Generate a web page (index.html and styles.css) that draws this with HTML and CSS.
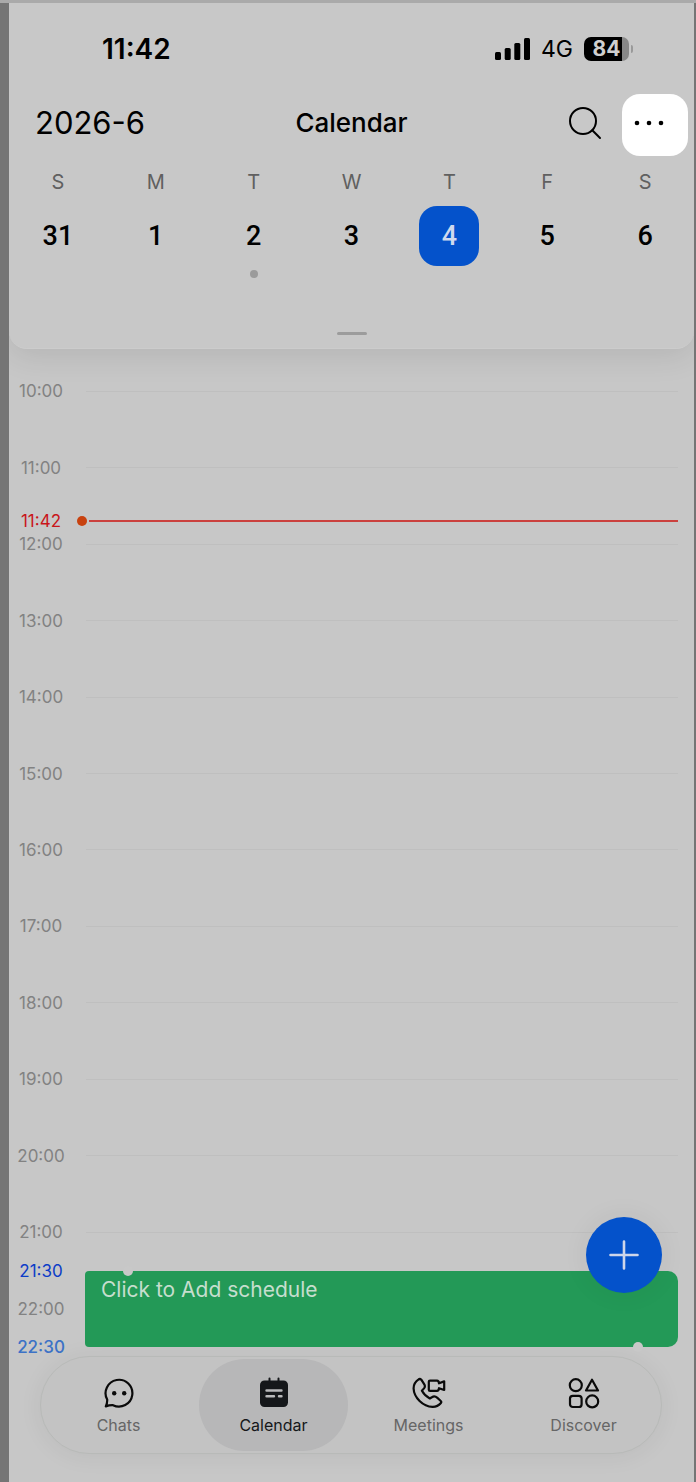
FILE: index.html
```html
<!DOCTYPE html>
<html lang="en">
<head>
<meta charset="UTF-8" />
<meta name="viewport" content="width=device-width, initial-scale=1" />
<title>Calendar</title>
<link rel="stylesheet" href="styles.css">
</head>
<body>

<div class="screen">
  <header class="panel">
    <div class="status-bar">
      <span class="clock">11:42</span>
      <div class="status-icons">
        <svg width="35" height="22" viewBox="0 0 35 22" aria-hidden="true">
          <rect x="0" y="14" width="6" height="8" rx="1.5"/>
          <rect x="9.7" y="10" width="6" height="12" rx="1.5"/>
          <rect x="19.3" y="5" width="6" height="17" rx="1.5"/>
          <rect x="29" y="0" width="6" height="22" rx="1.5"/>
        </svg>
        <span class="network">4G</span>
        <span class="battery"><span class="battery-level">84</span></span>
      </div>
    </div>

    <div class="title-bar">
      <div class="month">2026-6</div>
      <h1 class="title">Calendar</h1>
      <div class="actions">
        <button class="icon-btn" aria-label="Search">
          <svg width="34" height="34" viewBox="0 0 34 34" fill="none" stroke="#000" stroke-width="2" stroke-linecap="round">
            <circle cx="15" cy="15" r="13"/>
            <path d="M24.3 24.3L32 32"/>
          </svg>
        </button>
        <button class="more-btn" aria-label="More">
          <svg width="30" height="6" viewBox="0 0 30 6">
            <circle cx="3" cy="3" r="2.3"/>
            <circle cx="15" cy="3" r="2.3"/>
            <circle cx="27" cy="3" r="2.3"/>
          </svg>
        </button>
      </div>
    </div>

    <div class="week">
      <div class="day"><span class="weekday">S</span><button class="date">31</button></div>
      <div class="day"><span class="weekday">M</span><button class="date">1</button></div>
      <div class="day"><span class="weekday">T</span><button class="date">2</button><span class="dot"></span></div>
      <div class="day"><span class="weekday">W</span><button class="date">3</button></div>
      <div class="day"><span class="weekday">T</span><button class="date selected">4</button></div>
      <div class="day"><span class="weekday">F</span><button class="date">5</button></div>
      <div class="day"><span class="weekday">S</span><button class="date">6</button></div>
    </div>
    <div class="handle"></div>
  </header>

  <main class="timeline">
    <div class="hours">
      <div class="hour"><span class="time">10:00</span></div>
      <div class="hour"><span class="time">11:00</span></div>
      <div class="hour"><span class="time">12:00</span></div>
      <div class="hour"><span class="time">13:00</span></div>
      <div class="hour"><span class="time">14:00</span></div>
      <div class="hour"><span class="time">15:00</span></div>
      <div class="hour"><span class="time">16:00</span></div>
      <div class="hour"><span class="time">17:00</span></div>
      <div class="hour"><span class="time">18:00</span></div>
      <div class="hour"><span class="time">19:00</span></div>
      <div class="hour"><span class="time">20:00</span></div>
      <div class="hour"><span class="time">21:00</span></div>
      <div class="hour event-hour">
        <span class="time">22:00</span>
        <span class="time edge-start">21:30</span>
        <span class="time edge-end">22:30</span>
        <button class="event">Click to Add schedule</button>
      </div>
      <!-- 1.7 hours past 10:00, plus the half row above it, out of 13 rows -->
      <div class="now" style="top: 16.92%"><span class="time">11:42</span></div>
    </div>
    <button class="add-btn" aria-label="Add schedule">
      <svg width="30" height="30" viewBox="0 0 30 30" stroke="#ced6ea" stroke-width="2.6" stroke-linecap="round">
        <path d="M1.5 15H28.5M15 1.5V28.5"/>
      </svg>
    </button>
  </main>

  <nav class="tabs">
    <a class="tab" href="#chats">
      <svg width="32" height="32" viewBox="0 0 32 32" fill="none" stroke="#0a0a0a" stroke-width="2.2" stroke-linejoin="round">
        <path d="M4.2 22.6A13.4 13.4 0 1 1 10 28.2C7.600 28.100 5.200 28.500 2.800 29.400C3.900 27.200 4.300 25 4.200 22.600Z"/>
        <circle cx="11.2" cy="16.3" r="2.2" fill="#0a0a0a" stroke="none"/>
        <circle cx="21.2" cy="16.3" r="2.2" fill="#0a0a0a" stroke="none"/>
      </svg>
      Chats
    </a>
    <a class="tab active" href="#calendar">
      <svg width="32" height="32" viewBox="0 0 32 32" fill="none" stroke-linecap="round">
        <rect x="2" y="3.5" width="28" height="26.5" rx="4.5" fill="#15171a"/>
        <path d="M11.5 1.5V5M20.5 1.5V5" stroke="#15171a" stroke-width="2"/>
        <path d="M8.500 13.500H23.500M8.500 19.300H16M21 19.300H23.500" stroke="#b8b8ba" stroke-width="2.4"/>
      </svg>
      Calendar
    </a>
    <a class="tab" href="#meetings">
      <svg width="34" height="32" viewBox="0 0 34 32" fill="none" stroke="#0a0a0a" stroke-width="2.2" stroke-linejoin="round" stroke-linecap="round">
        <path d="M9.300 2.700C8.500 1.900 7.300 1.800 6.300 2.600C3.200 4.800 1.500 7.800 1.600 11.500C1.900 20.500 11 29.600 20.500 29.800C24 29.900 26.800 28.500 28.700 26.300C29.500 25.400 29.400 24.500 28.500 23.700L25.400 20.900C23.700 19.400 22.100 18.800 20.300 20L17.800 21.500C14.500 19.800 11.700 17 9.900 13.800L12 11.400C13 10.200 13.100 8.700 12.300 7.300Z"/>
        <path d="M18 3.600H25Q26.800 3.600 27 6.300L32.200 4.400V13L27 11.200Q26.800 13.900 25 13.900H18Q16.800 13.900 16.800 12.700V4.800Q16.800 3.600 18 3.600Z"/>
      </svg>
      Meetings
    </a>
    <a class="tab" href="#discover">
      <svg width="32" height="32" viewBox="0 0 32 32" fill="none" stroke="#0a0a0a" stroke-width="2.2" stroke-linejoin="round">
        <circle cx="7.8" cy="8.2" r="6"/>
        <path d="M24 2.700L30 13.500H18Z"/>
        <rect x="2" y="18.8" width="11.6" height="11.2" rx="2.8"/>
        <circle cx="24.2" cy="24.4" r="6"/>
      </svg>
      Discover
    </a>
  </nav>
</div>

</body>
</html>
```
FILE: styles.css
```css
* { box-sizing: border-box; }
html, body { margin: 0; padding: 0; }
body {
  display: flex; min-height: 100vh;
  padding: 0 2px 0 9px;
  background: #757575;
  border-top: 3px solid #aaa;
  font-family: Inter, Arial, sans-serif; color: #000;
}
button {
  font: inherit; color: inherit; background: none;
  border: none; padding: 0; cursor: pointer;
}
svg { display: block; }
.screen {
  flex: 1; display: flex; flex-direction: column;
  background: #c7c7c7; overflow: hidden;
}

/* top panel */
.panel {
  position: relative;
  background: #c8c8c8;
  padding-bottom: 13px;
  border-bottom: 1px solid #cccccc;
  border-radius: 0 0 18px 18px;
  box-shadow: 0 8px 30px rgba(0,0,0,0.09);
}
.status-bar {
  display: flex; align-items: center; justify-content: space-between;
  height: 91px; padding: 0 61px 0 93px;
}
.clock { font-size: 28px; font-weight: 600; }
.status-icons { display: flex; align-items: center; gap: 11px; }
.network { font-size: 23px; }
.battery {
  position: relative; width: 45px; height: 24px;
  border-radius: 7px;
  background: linear-gradient(to right, #000 84%, #888 84%);
  margin-right: 4px;
}
.battery::after {
  content: ""; position: absolute; left: 47px; top: 8px;
  width: 2px; height: 8px; border-radius: 0 2px 2px 0; background: #999;
}
.battery-level {
  display: block; text-align: center; line-height: 24px;
  font-size: 21px; font-weight: 700; color: #cfcfcf;
}
.title-bar {
  display: grid; grid-template-columns: 1fr auto 1fr; align-items: center;
}
.month { font-size: 31px; padding: 0 0 5px 26px; }
.title { margin: 0; padding-bottom: 5px; font-size: 26px; font-weight: 500; }
.actions {
  display: flex; align-items: center; justify-content: flex-end;
  gap: 20px; padding-right: 6px;
}
.icon-btn { padding-bottom: 4px; }
.more-btn {
  display: flex; justify-content: center;
  width: 66px; height: 62px; padding: 26px 12px 30px 0;
  background: #fff; border-radius: 18px;
}
.week {
  display: grid; grid-template-columns: repeat(7, 1fr);
  height: 176px; padding-top: 16px;
}
.day { display: flex; flex-direction: column; align-items: center; }
.weekday { font-size: 20px; line-height: 20px; color: #606060; }
.date {
  width: 60px; height: 60px; margin: 14px 0 4px;
  font-family: Roboto, sans-serif; font-size: 27px; font-weight: 500;
  border-radius: 18px;
}
.selected { background: #0452cb; color: #cfd9ee; }
.dot { width: 8px; height: 8px; border-radius: 50%; background: #9b9b9b; }
.handle {
  width: 30px; height: 3px; margin: 0 auto;
  border-radius: 2px; background: #9c9c9c;
}

/* day timeline */
.timeline {
  flex: 1; display: flex; position: relative;
  padding-top: 4px;
}
.hours {
  flex: 1; display: grid; grid-auto-rows: minmax(48px, 1fr);
  position: relative;
}
.hour {
  display: flex; align-items: center; position: relative;
  padding-right: 16px;
}
.hour::after { content: ""; flex: 1; height: 1px; margin-left: 13px; background: #bfbfbf; }
.time {
  width: 64px; text-align: center;
  font-size: 17px; line-height: 20px; color: #828282;
}
.now {
  display: flex; align-items: center;
  position: absolute; left: 0; right: 16px;
  transform: translateY(-50%);
}
.now .time { color: #c9151a; }
.now::before {
  content: ""; order: 1; width: 10px; height: 10px; margin: 0 2px 0 4px;
  border-radius: 50%; background: #c8420f;
}
.now::after { content: ""; order: 2; flex: 1; height: 2px; background: #cb413e; }
.event-hour::after { display: none; }
.event {
  position: relative; flex: 1; align-self: stretch; margin-left: 12px;
  display: flex; align-items: flex-start;
  padding: 6px 16px;
  background: #239957; border-radius: 4px 10px 10px 4px;
  font-size: 21px; line-height: 26px; color: #c6dece;
}
/* drag handles, half hidden by the edges of the event */
.event::before, .event::after {
  content: ""; position: absolute; width: 10px; height: 10px;
  border-radius: 50%; background: #c8c8c8;
}
.event::before { left: 38px; top: -5px; }
.event::after { right: 35px; bottom: -5px; }
.edge-start, .edge-end { position: absolute; left: 0; color: #0d3cc8; }
.edge-start { top: -10px; }
.edge-end { bottom: -10px; font-weight: 500; color: #3c72c6; }
.add-btn {
  display: flex; align-items: center; justify-content: center;
  position: absolute; right: 32px; bottom: 54px;
  width: 76px; height: 76px;
  background: #0452cb; border-radius: 50%;
  box-shadow: 0 0 28px rgba(0,0,0,0.06);
}

/* bottom tabs */
.tabs {
  display: flex; margin: 9px 32px 28px 31px; height: 98px; padding: 2px 0;
  background: #c3c3c3; border: 1px solid #b8bab8; border-radius: 49px;
  box-shadow: 0 2px 24px rgba(0,0,0,0.06);
}
.tab {
  flex: 1; display: flex; flex-direction: column; align-items: center;
  gap: 6px; margin: 0 3px; padding-top: 18px;
  font-size: 16px; line-height: 20px;
  color: #666; text-decoration: none; border-radius: 46px;
}
.active { background: #b7b7b8; color: #15171a; }
```
